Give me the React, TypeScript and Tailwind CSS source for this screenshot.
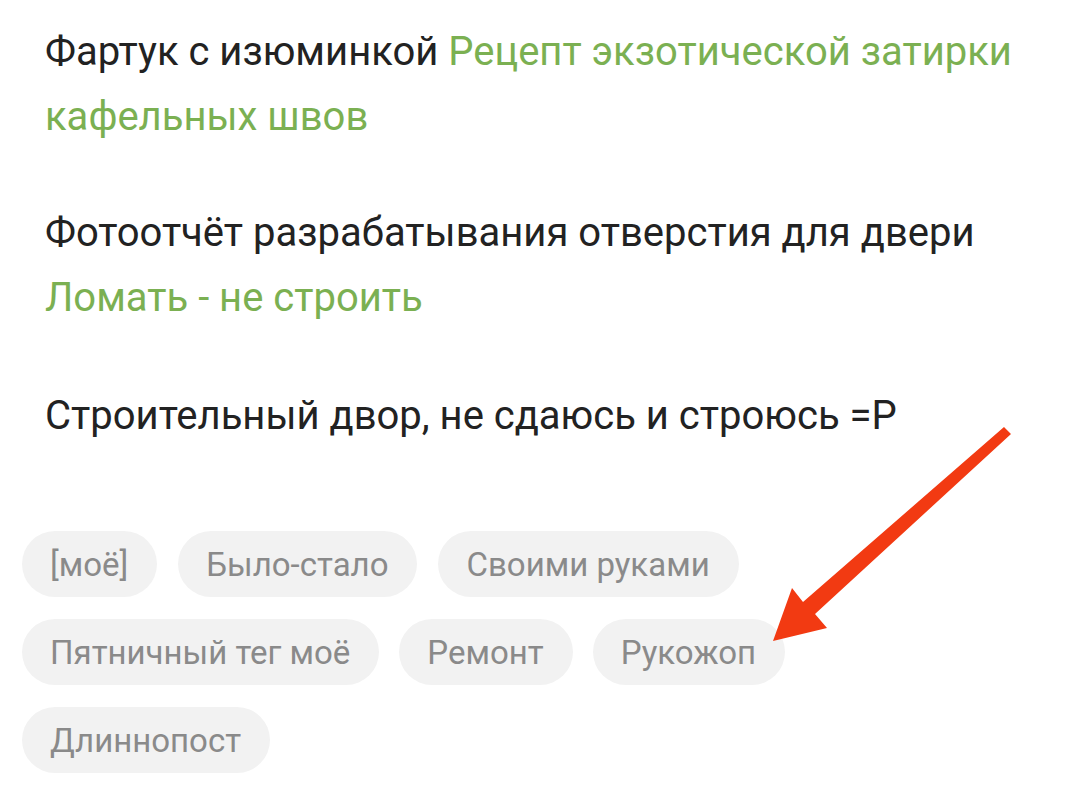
import React from "react";

const tags1 = ["[моё]", "Было-стало", "Своими руками"];
const tags2 = ["Пятничный тег моё", "Ремонт", "Рукожоп"];
const tags3 = ["Длиннопост"];

function Tag({ t }: { t: string }) {
  return (
    <div className="h-[66px] pl-[28px] pr-[29px] rounded-full bg-[#f2f2f2] text-[#8a8a8a] text-[33px] flex items-center leading-none">
      {t}
    </div>
  );
}

export default function App() {
  return (
    <div
      className="relative w-[1080px] h-[810px] bg-white overflow-hidden"
      style={{ fontFamily: "Roboto, 'Noto Sans', sans-serif" }}
    >
      <div className="pl-[45px] pr-[30px] pt-[19px] text-[40px] leading-[65px] text-[#222222]">
        <p>
          Фартук с изюминкой <span className="text-[#7bb052]">Рецепт экзотической затирки кафельных швов</span>
        </p>
        <p className="mt-[51px]">
          Фотоотчёт разрабатывания отверстия для двери
          <br />
          <span className="text-[#7bb052]">Ломать - не строить</span>
        </p>
        <p className="mt-[53px]">Строительный двор, не сдаюсь и строюсь =P</p>
      </div>
      <div className="pl-[22px] mt-[83px] flex flex-col gap-[22px]">
        <div className="flex gap-[21px]">{tags1.map((t) => <Tag key={t} t={t} />)}</div>
        <div className="flex gap-[20px]">{tags2.map((t) => <Tag key={t} t={t} />)}</div>
        <div className="flex gap-[22px]">{tags3.map((t) => <Tag key={t} t={t} />)}</div>
      </div>
      <svg className="absolute left-0 top-0" width="1080" height="810" viewBox="0 0 1080 810">
        <polygon
          points="1004,427 1011,434 815,614 827,628 773,641 792,588 803,602"
          fill="#f23a12"
        />
      </svg>
    </div>
  );
}
